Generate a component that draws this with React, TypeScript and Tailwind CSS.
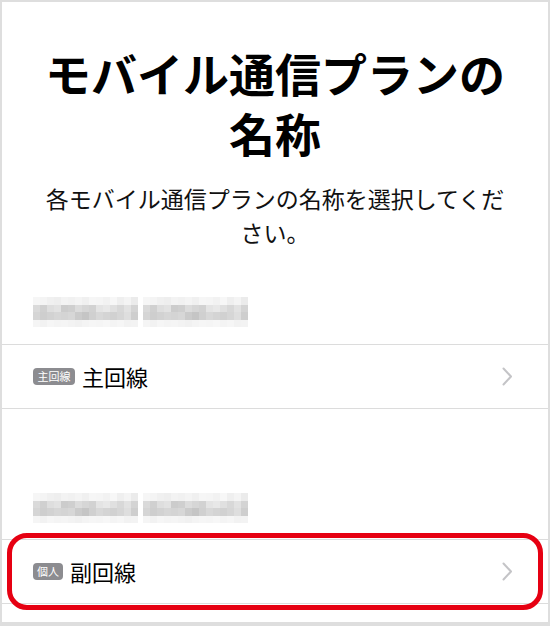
const jp = { fontFamily: '"Noto Sans CJK JP", "Noto Sans", sans-serif' };

const mosaicRows = [
  ["#f6f6f6", "#f4f4f4", "#f0f0f0", "#eeeeee", "#f3f3f3", "#f1f1f1", "#f4f4f4", "#f0f0f0", "#f6f6f6", "#f5f5f5", "#f2f2f2", "#f7f7f7", "#efefef", "#f4f4f4", "#ebebeb"],
  ["#dadada", "#d0d0d0", "#dedede", "#e2e2e2", "#cccccc", "#cfcfcf", "#dcdcdc", "#d6d6d6", "#d2d2d2", "#e4e4e4", "#e8e8e8", "#e0e0e0", "#d8d8d8", "#e2e2e2", "#d4d4d4"],
  ["#d5d5d5", "#cecece", "#d2d2d2", "#d6d6d6", "#d4d4d4", "#d7d7d7", "#cbcbcb", "#c5c5c5", "#d0d0d0", "#d8d8d8", "#d4d4d4", "#d1d1d1", "#d6d6d6", "#dedede", "#cecece"],
  ["#f5f5f5", "#f2f2f2", "#f6f6f6", "#f4f4f4", "#f5f5f5", "#f3f3f3", "#f1f1f1", "#f4f4f4", "#f6f6f6", "#f5f5f5", "#f7f7f7", "#f4f4f4", "#f6f6f6", "#f2f2f2", "#f3f3f3"],
];

function Mosaic() {
  return (
    <div className="flex flex-col">
      {mosaicRows.map((row, i) => (
        <div key={i} className="flex h-[7.5px]">
          {row.map((c, j) => (
            <div key={j} className="w-[7px] h-full" style={{ backgroundColor: c }} />
          ))}
        </div>
      ))}
    </div>
  );
}

function SectionHeader() {
  return (
    <div className="flex gap-[5px] pl-[31px]">
      <Mosaic />
      <Mosaic />
    </div>
  );
}

function Chevron() {
  return (
    <svg width="11" height="19" viewBox="0 0 11 19" fill="none">
      <path d="M1.5 1.5L9 9.5L1.5 17.5" stroke="#c4c4c7" strokeWidth="2" strokeLinecap="round" strokeLinejoin="round" />
    </svg>
  );
}

function PlanRow({ badge, label, badgeWidth }: { badge: string; label: string; badgeWidth: string }) {
  return (
    <div className="flex items-center h-[63px] pl-[31px] pr-[35px]">
      <span
        className={`${badgeWidth} h-[17px] rounded-[4px] bg-[#8c8c90] text-white text-[11px] leading-[17px] text-center`}
      >
        {badge}
      </span>
      <span className="ml-[7px] text-[22px] text-black flex-1">{label}</span>
      <Chevron />
    </div>
  );
}

export default function App() {
  return (
    <div
      className="w-[550px] h-[626px] bg-white border-x-2 border-t-2 border-b-4 border-[#dedede] overflow-hidden"
      style={jp}
    >
      <h1 className="pt-[40px] text-center text-[46px] leading-[60px] font-bold text-black">
        モバイル通信プランの
        <br />
        名称
      </h1>
      <p className="mt-[19px] text-center text-[23px] leading-[34px] text-[#111]">
        各モバイル通信プランの名称を選択してくだ
        <br />
        さい。
      </p>
      <div className="mt-[48px]">
        <SectionHeader />
      </div>
      <div className="mt-[17px] border-t border-[#dcdcdc]" />
      <PlanRow badge="主回線" label="主回線" badgeWidth="w-[42px]" />
      <div className="border-t border-[#dcdcdc]" />
      <div className="h-[84px]" />
      <SectionHeader />
      <div className="mt-[16px] border-t border-[#dcdcdc]" />
      <div className="relative">
        <PlanRow badge="個人" label="副回線" badgeWidth="w-[30px]" />
        <div className="absolute left-[5px] right-[5px] top-[-7px] bottom-[-7px] rounded-[20px] border-[5px] border-[#e60012]" />
      </div>
      <div className="border-t border-[#dcdcdc]" />
    </div>
  );
}
